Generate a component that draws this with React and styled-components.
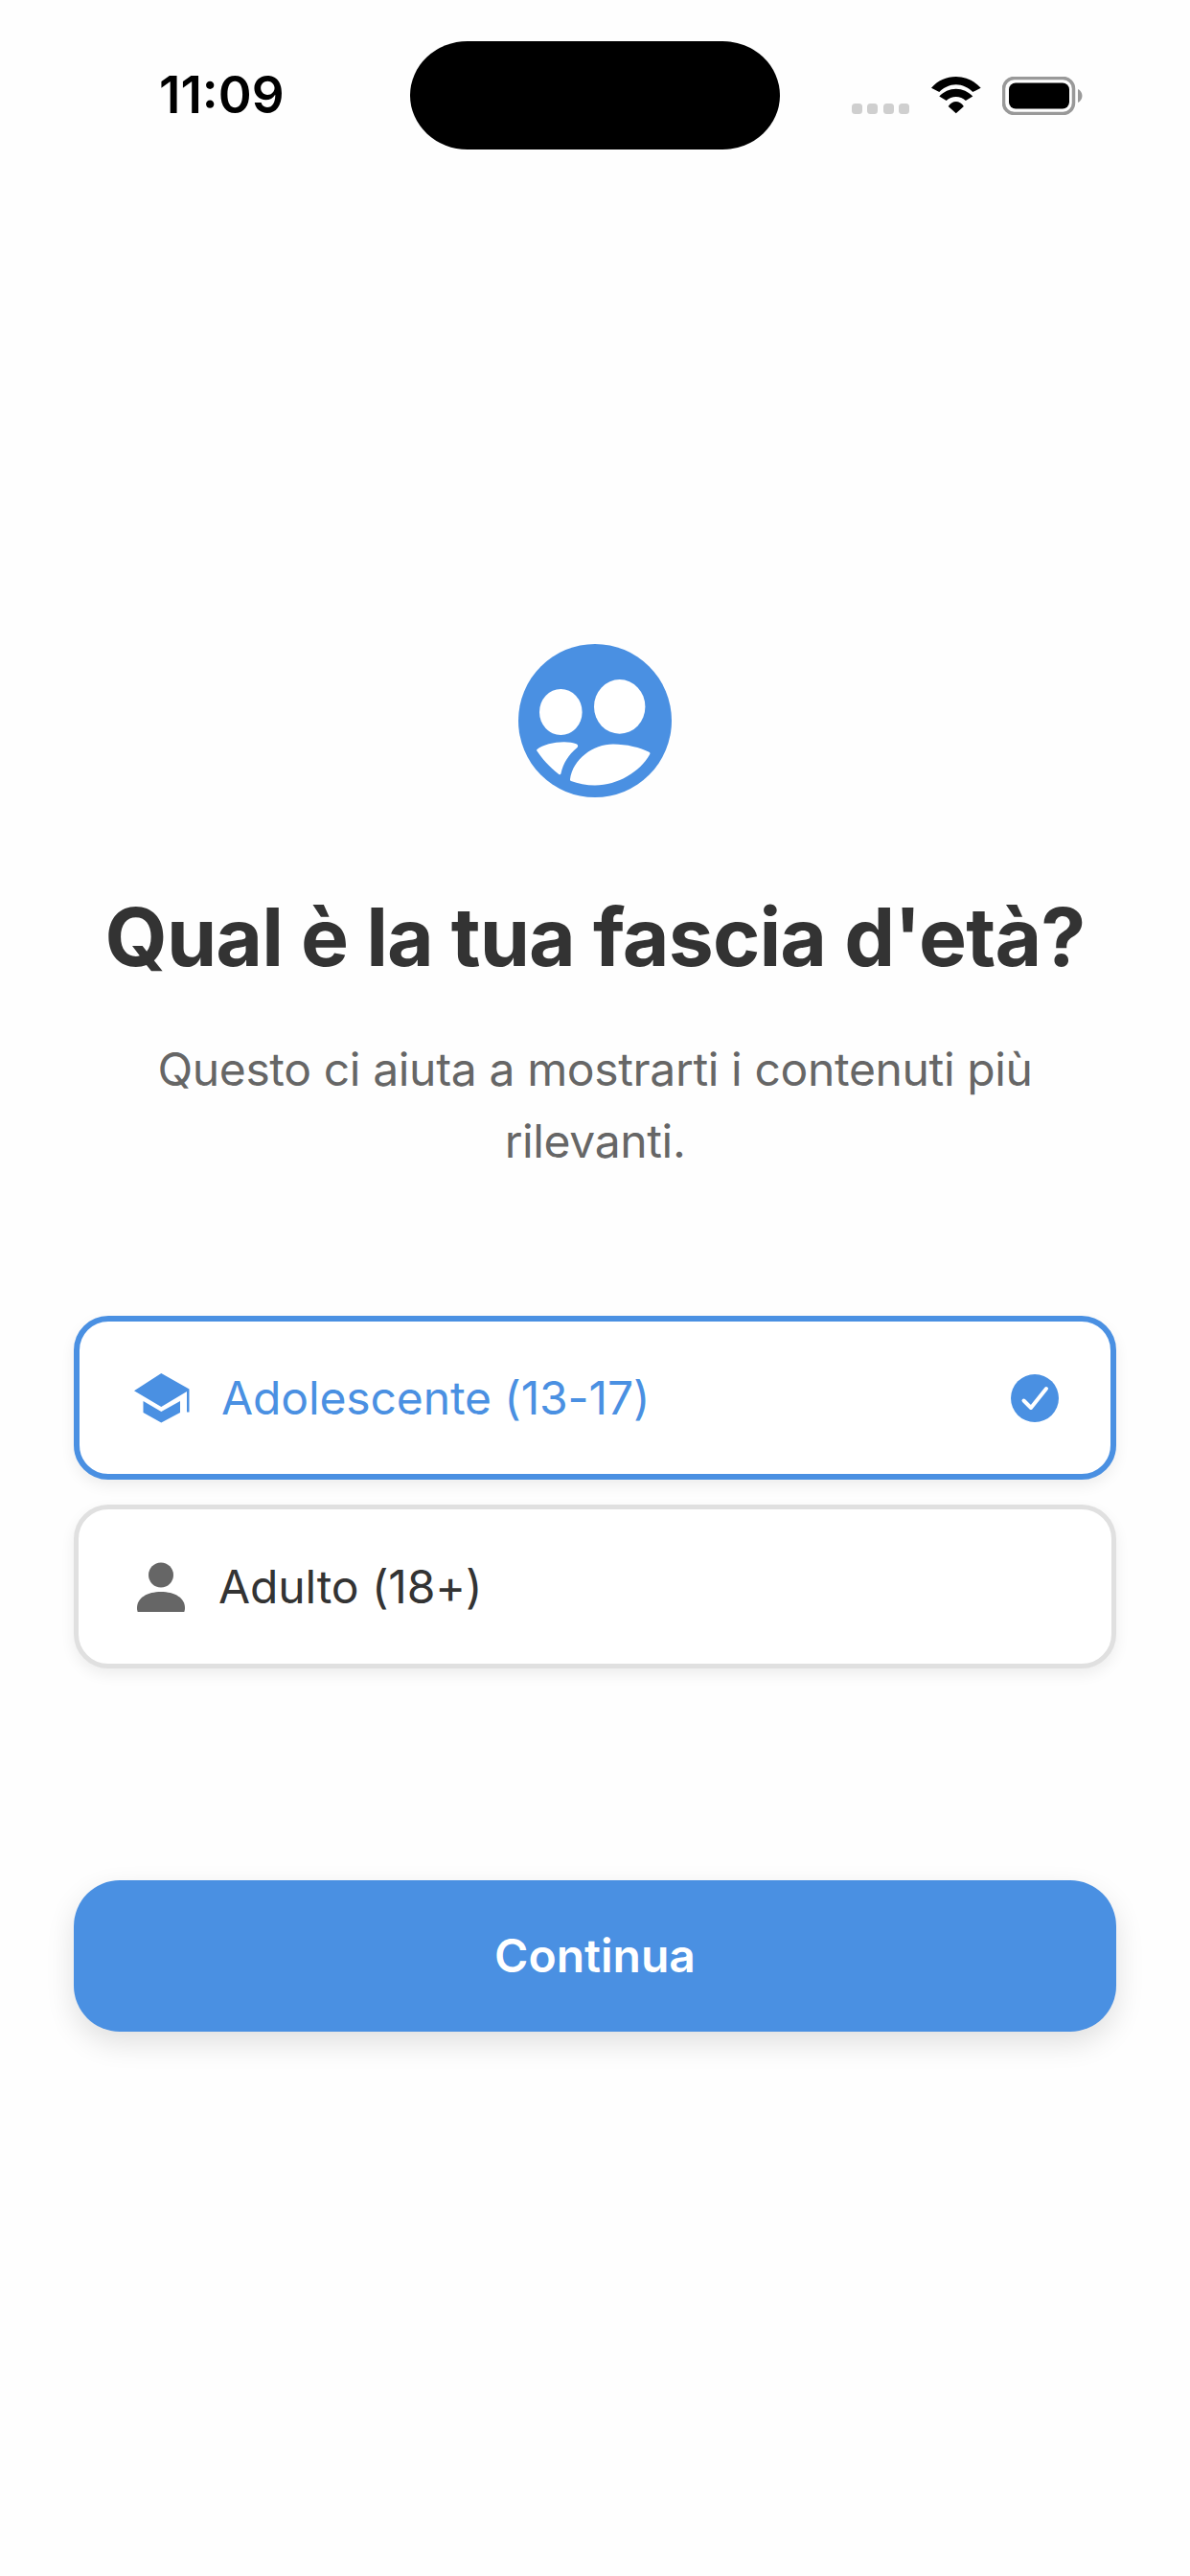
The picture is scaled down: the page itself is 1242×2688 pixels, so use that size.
import React from "react";
import styled, { createGlobalStyle } from "styled-components";

const blue = "#4a90e2";

const Global = createGlobalStyle`
  html, body { margin: 0; padding: 0; background: #fefefe; }
  body { font-family: Inter, "Noto Sans", sans-serif; }
`;
const Page = styled.div`
  width: 1242px; height: 2688px; overflow: hidden; background: #fefefe;
  display: flex; flex-direction: column;
`;
const StatusBar = styled.header`
  height: 113px; padding-top: 43px; padding-left: 166px;
  display: flex; align-items: center; background: #fefefe;
`;
const Time = styled.span`
  font: 600 53px/1 "Inter", sans-serif; color: #000; width: 262px; flex: none;
`;
const Island = styled.div`
  width: 386px; height: 113px; border-radius: 60px / 56.5px; background: #000; flex: none;
`;
const StatusIcons = styled.div`
  flex: 1; padding-left: 75px; display: flex; align-items: center; height: 40px;
`;
const Dots = styled.div`
  display: flex; gap: 5.3px; align-self: flex-end; margin-bottom: 1px;
`;
const Dot = styled.i`
  display: block; width: 11px; height: 11px; border-radius: 3.5px; background: #cfcfcf;
`;
const Wifi = styled.svg`
  width: 52px; height: 39px; margin-left: 23px; display: block;
`;
const Battery = styled.svg`
  width: 84px; height: 40px; margin-left: 22px; display: block;
`;
const Main = styled.main`
  flex: 1; padding: 516px 77px 0; display: flex; flex-direction: column; align-items: center;
`;
const Logo = styled.svg`
  width: 160px; height: 160px; display: block; flex: none;
`;
const Title = styled.h1`
  margin: 94px 0 0; font: 700 84px/104px Inter, sans-serif; letter-spacing: -0.9px; color: #333; white-space: nowrap;
`;
const Subtitle = styled.p`
  margin: 48px 0 0; width: 960px; text-align: center; letter-spacing: -0.36px;
  font: 400 48px/75px Inter, sans-serif; color: #666;
`;
const Options = styled.div`
  margin-top: 145px; align-self: stretch; display: flex; flex-direction: column; gap: 26px;
`;
const Option = styled.div`
  box-sizing: border-box; height: 171px; padding: 0 54px 0 57px;
  display: flex; align-items: center; background: #fff; border-radius: 36px;
  border: ${p => (p.$selected ? `6px solid ${blue}` : "5px solid #e0e0e0")};
  box-shadow: 0 6px 15px rgba(0,0,0,.07);
`;
const OptionIcon = styled.svg`
  width: 58px; height: 52px; flex: none; display: block;
`;
const OptionLabel = styled.span`
  margin-left: ${p => (p.$selected ? 33 : 31)}px; flex: 1; letter-spacing: -0.12px;
  font: 400 48px/1 Inter, sans-serif; color: ${p => (p.$selected ? blue : "#333")};
`;
const Check = styled.svg`
  width: 50px; height: 50px; flex: none; display: block;
`;
const Button = styled.button`
  margin-top: 221px; align-self: stretch; height: 158px; border: 0; border-radius: 48px;
  background: ${blue}; color: #fff; font: 600 48px/1 Inter, sans-serif;
  box-shadow: 0 12px 30px rgba(0,0,0,.12);
`;

export default function App() {
  return (
    <Page>
      <Global />
      <StatusBar>
        <Time>11:09</Time>
        <Island />
        <StatusIcons>
          <Dots><Dot /><Dot /><Dot /><Dot /></Dots>
          <Wifi viewBox="0 0 52 39">
            <path d="M25.800 0C15.500 0 7 4 0 11.700L8.300 16C13 11.500 19 8.300 25.800 8.300S38.500 11.500 43.300 16L51.700 11.700C44.500 4 36 0 25.800 0Z" />
            <path d="M25.800 12.700C19 12.700 13 15.500 8.300 20.500L15.700 25C18.500 22.500 22 21 25.800 21S33 22.500 35.900 25L43.300 20.500C38.500 15.500 32.500 12.700 25.800 12.700Z" />
            <path d="M25.800 26C22.800 26 20 27.500 17.700 31L25.800 38.300L33.900 31C31.600 27.500 28.800 26 25.800 26Z" />
          </Wifi>
          <Battery viewBox="0 0 84 40">
            <rect x="1.500" y="1.500" width="73" height="37" rx="11" fill="none" stroke="#999" strokeWidth="3.500" />
            <rect x="7" y="6.500" width="63" height="27" rx="7" fill="#000" />
            <path d="M79 13c2.500 1 4.500 4 4.500 7s-2 6-4.500 7z" fill="#999" />
          </Battery>
        </StatusIcons>
      </StatusBar>
      <Main>
        <Logo viewBox="0 0 160 160">
          <circle cx="80" cy="80" r="80" fill={blue} />
          <ellipse cx="44.300" cy="71" rx="22.300" ry="24" fill="#fff" />
          <ellipse cx="105.700" cy="65.400" rx="26.700" ry="28.300" fill="#fff" />
          <path fill="#fff" d="M19.500 110C28 103 50 100 61 104.500Q63 106 61.500 108C52 116 47 124 44.500 135Q44 137 42 135.700C32 128 25 120 19 111Z" />
          <path fill="#fff" d="M54 141C57 120 78 104.500 99 104.500C113 104.500 127 108 137 113Q138 114 137 115.500C127 133 104 147.500 80 147.500C71 147.500 62 145.500 55 143Q53.500 142.500 54 141Z" />
        </Logo>
        <Title>Qual è la tua fascia d'età?</Title>
        <Subtitle>Questo ci aiuta a mostrarti i contenuti più rilevanti.</Subtitle>
        <Options>
          <Option $selected>
            <OptionIcon viewBox="0 0 58 52">
              <path fill={blue} d="M28.300 0L57.500 16.500V40.500H55V19L28.300 35L0 18.300z" />
              <path fill={blue} d="M9.500 29L28.300 40L48 29V41L28.300 51.500L9.500 41z" />
            </OptionIcon>
            <OptionLabel $selected>Adolescente (13-17)</OptionLabel>
            <Check viewBox="0 0 50 50">
              <circle cx="25" cy="25" r="25" fill={blue} />
              <path d="M13.500 27.500L21 35L37 15" fill="none" stroke="#fff" strokeWidth="4" strokeLinecap="round" strokeLinejoin="round" />
            </Check>
          </Option>
          <Option>
            <OptionIcon viewBox="0 0 58 52">
              <circle cx="29" cy="13.500" r="13" fill="#666" />
              <path fill="#666" d="M4 48C4 37 15 31 29 31S54 37 54 48Q54 54 50 54H8Q4 54 4 48Z" />
            </OptionIcon>
            <OptionLabel>Adulto (18+)</OptionLabel>
          </Option>
        </Options>
        <Button>Continua</Button>
      </Main>
    </Page>
  );
}
